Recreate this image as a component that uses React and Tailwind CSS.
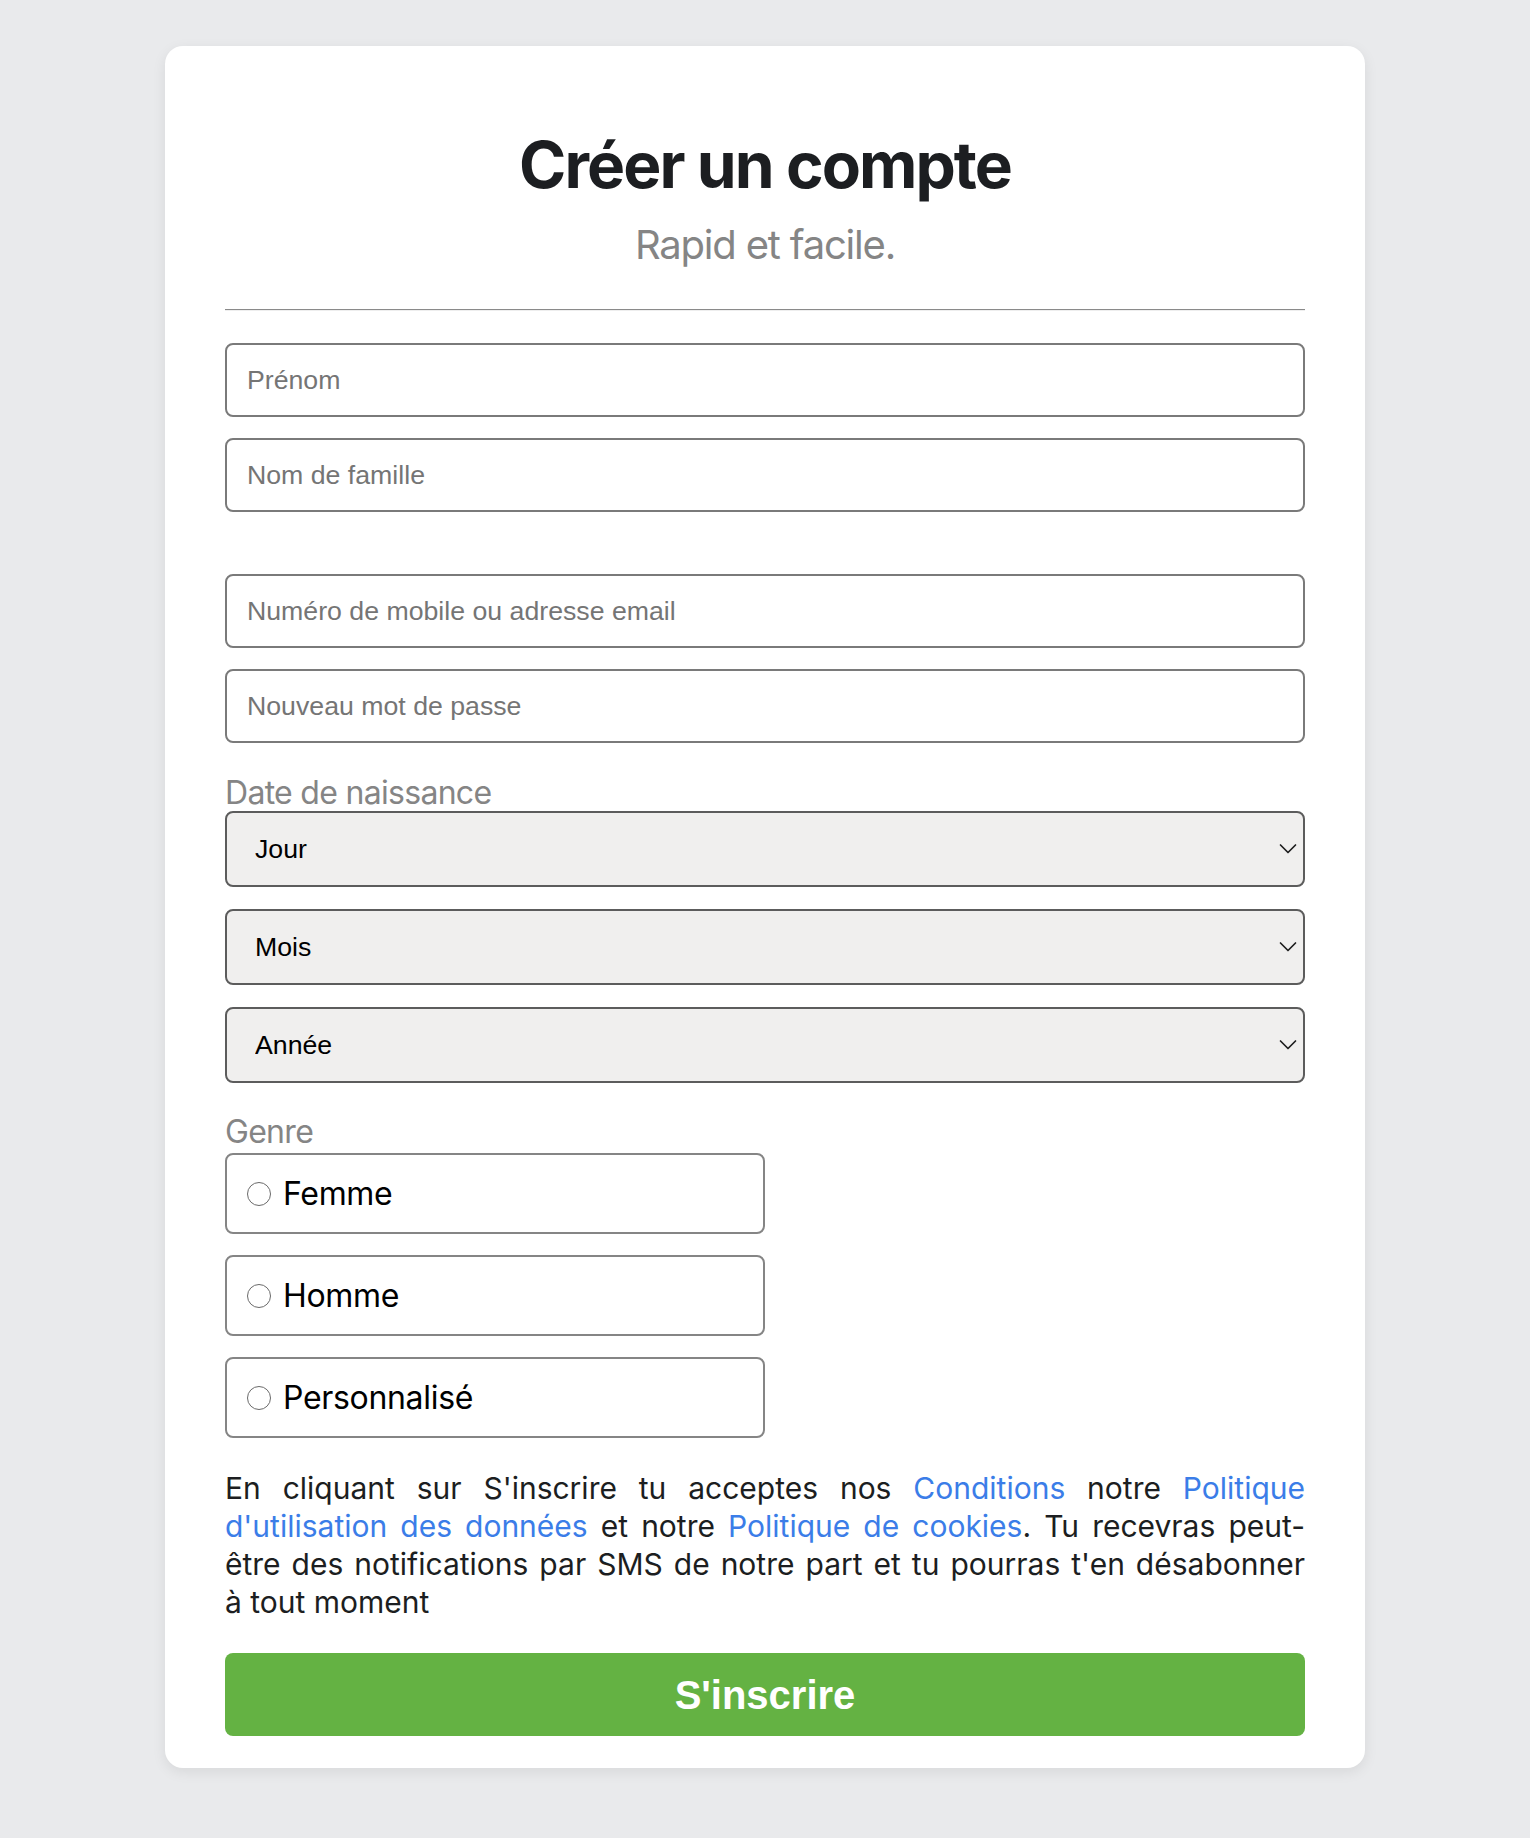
const sf = "font-['Inter','Noto_Sans',sans-serif]"
const helv = "font-['Liberation_Sans','Arial',sans-serif]"

function TextInput({ placeholder, type = 'text', className = '' }) {
  return (
    <input
      type={type}
      placeholder={placeholder}
      className={`block w-full h-[74px] rounded-lg border-2 border-[#7a7a7a] bg-white px-[20px] text-[26.7px] text-black placeholder:text-[#757575] outline-none ${helv} ${className}`}
    />
  )
}

function DateSelect({ label, className = '' }) {
  return (
    <div className={`relative ${className}`}>
      <select
        defaultValue=""
        className={`block w-full h-[76px] appearance-none rounded-lg border-2 border-[#5c5c5c] bg-[#f0efee] pl-[28px] pr-[40px] text-[26.7px] text-black outline-none ${helv}`}
      >
        <option value="">{label}</option>
      </select>
      <svg
        className="pointer-events-none absolute right-[8px] top-1/2 -translate-y-1/2"
        width="18"
        height="11"
        viewBox="0 0 18 11"
        fill="none"
      >
        <path d="M1.5 1.5 L9 9 L16.5 1.5" stroke="#1f1f1f" strokeWidth="1.7" strokeLinecap="round" strokeLinejoin="round" />
      </svg>
    </div>
  )
}

function GenderOption({ label, className = '' }) {
  return (
    <label className={`flex h-[81px] w-[540px] items-center gap-[12px] rounded-lg border-2 border-[#858585] bg-white px-[20px] ${className}`}>
      <input type="radio" name="genre" className="h-[24px] w-[24px] appearance-none rounded-full border-[1.5px] border-[#6a6a6a] bg-white" />
      <span className={`text-[32px] leading-none tracking-[-0.01em] text-black ${sf}`}>{label}</span>
    </label>
  )
}

export default function App() {
  return (
    <div className="min-h-screen bg-[#e9eaec] pt-[46px] pb-[71px]">
      <form className="mx-auto w-[1200px] rounded-[18px] bg-white px-[60px] pt-[81px] pb-[32px] shadow-[0_4px_14px_rgba(0,0,0,0.08)]">
        <h1 className={`text-center text-[64px] font-bold leading-[76px] tracking-[-0.03em] text-[#1c1e21] ${sf}`}>
          Créer un compte
        </h1>
        <p className={`mt-[18px] text-center text-[40px] leading-[48px] tracking-[-0.03em] text-[#858585] ${sf}`}>
          Rapid et facile.
        </p>

        <div className="mt-[40px] border-t border-b border-t-[#8a8a8a] border-b-[#eeeeee]" />

        <div className="mt-[32px] flex flex-col gap-[21px]">
          <TextInput placeholder="Prénom" />
          <TextInput placeholder="Nom de famille" />
        </div>

        <div className="mt-[62px] flex flex-col gap-[21px]">
          <TextInput placeholder="Numéro de mobile ou adresse email" />
          <TextInput placeholder="Nouveau mot de passe" type="password" />
        </div>

        <p className={`mt-[32px] text-[32px] leading-[36px] tracking-[-0.022em] text-[#858585] ${sf}`}>Date de naissance</p>
        <div className="flex flex-col gap-[22px]">
          <DateSelect label="Jour" />
          <DateSelect label="Mois" />
          <DateSelect label="Année" />
        </div>

        <p className={`mt-[30px] text-[32px] leading-[38px] tracking-[-0.022em] text-[#858585] ${sf}`}>Genre</p>
        <div className="mt-[2px] flex flex-col gap-[21px]">
          <GenderOption label="Femme" />
          <GenderOption label="Homme" />
          <GenderOption label="Personnalisé" />
        </div>

        <p className={`mt-[31px] text-justify text-[30px] leading-[38px] text-[#1c1e21] ${sf}`}>
          En cliquant sur S'inscrire tu acceptes nos{' '}
          <a href="#" className="text-[#3b7de8]">Conditions</a> notre{' '}
          <a href="#" className="text-[#3b7de8]">Politique d'utilisation des données</a> et notre{' '}
          <a href="#" className="text-[#3b7de8]">Politique de cookies</a>. Tu recevras peut-être des notifications par SMS de notre part et tu pourras t'en désabonner à{'\u00a0'}tout moment
        </p>

        <button
          type="button"
          className={`mt-[32px] block h-[83px] w-full rounded-lg bg-[#64b243] text-[40px] font-bold text-white ${helv}`}
        >
          S'inscrire
        </button>
      </form>
    </div>
  )
}
